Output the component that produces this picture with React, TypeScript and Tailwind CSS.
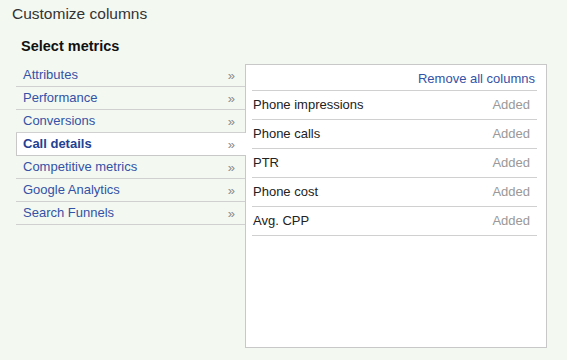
import React from "react";

const cats = [
  "Attributes",
  "Performance",
  "Conversions",
  "Call details",
  "Competitive metrics",
  "Google Analytics",
  "Search Funnels",
];

const metrics = ["Phone impressions", "Phone calls", "PTR", "Phone cost", "Avg. CPP"];

export default function App() {
  return (
    <div
      className="w-[567px] h-[360px] bg-[#f3f8f1] text-[#333] overflow-hidden"
      style={{ fontFamily: '"Liberation Sans", Arial, sans-serif' }}
    >
      <div className="pl-[12px] pt-[5px] text-[15.5px] leading-[18px] text-[#333]">Customize columns</div>
      <div className="pl-[21px] pt-[15px] text-[14.5px] leading-[16px] font-bold text-[#111]">Select metrics</div>
      <div className="flex pl-[16px] pt-[10px]">
        <div className="w-[229px] flex flex-col">
          {cats.map((c) => {
            const sel = c === "Call details";
            return (
              <div
                key={c}
                className={
                  sel
                    ? "relative z-10 mr-[-1px] h-[23px] bg-white border-l border-b border-[#c8c8c8] flex items-center justify-between pl-[6px] pr-[11px]"
                    : "h-[23px] border-b border-[#d0d0d0] flex items-center justify-between pl-[7px] pr-[10px]"
                }
              >
                <span
                  className={
                    sel
                      ? "text-[13px] font-bold text-[#234193]"
                      : "text-[13px] text-[#3452a6]"
                  }
                >
                  {c}
                </span>
                <span className="text-[13px] text-[#8a8a8a] leading-none">»</span>
              </div>
            );
          })}
        </div>
        <div className="w-[302px] h-[284px] bg-white border border-[#c8c8c8] pl-[6px] pr-[9px]">
          <div className="h-[26px] border-b border-[#d0d0d0] flex items-center justify-end pr-[2px] pt-[2px] text-[13px] text-[#3452a6]">
            Remove all columns
          </div>
          {metrics.map((m) => (
            <div
              key={m}
              className="h-[29px] border-b border-[#d0d0d0] flex items-center justify-between pl-[1px] pr-[7px] text-[13px]"
            >
              <span className="text-[#222]">{m}</span>
              <span className="text-[#999]">Added</span>
            </div>
          ))}
        </div>
      </div>
    </div>
  );
}
